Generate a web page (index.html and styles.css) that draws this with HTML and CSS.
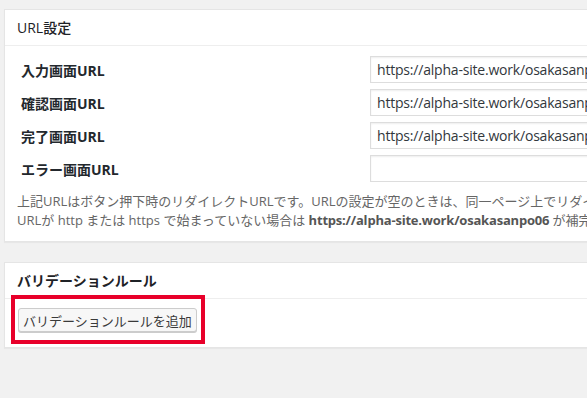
FILE: index.html
```html
<!DOCTYPE html>
<html lang="ja">
<head>
  <meta charset="UTF-8" />
  <meta name="viewport" content="width=device-width, initial-scale=1.0" />
  <title>URL設定</title>
  <link rel="stylesheet" href="styles.css">
</head>
<body>
  <div class="wrap">
    <div class="postbox">
      <h2 class="hndle">URL設定</h2>
      <div class="inside">
        <div class="form-grid">
          <label class="form-label">入力画面URL</label>
          <input class="form-input" type="text" value="https://alpha-site.work/osakasanpo06/contact/" />
          <label class="form-label">確認画面URL</label>
          <input class="form-input" type="text" value="https://alpha-site.work/osakasanpo06/confirm/" />
          <label class="form-label">完了画面URL</label>
          <input class="form-input" type="text" value="https://alpha-site.work/osakasanpo06/thanks/" />
          <label class="form-label">エラー画面URL</label>
          <input class="form-input" type="text" value="" />
        </div>
        <p class="description">
          上記URLはボタン押下時のリダイレクトURLです。URLの設定が空のときは、同一ページ上でリダイレクトします。<br>
          URLが http または https で始まっていない場合は <strong>https://alpha-site.work/osakasanpo06</strong> が補完されます。
        </p>
      </div>
    </div>

    <div class="postbox">
      <h2 class="hndle bold">バリデーションルール</h2>
      <div class="inside inside-btn">
        <span class="highlight">
          <button class="button" type="button">バリデーションルールを追加</button>
        </span>
      </div>
    </div>
  </div>
</body>
</html>
```

FILE: styles.css
```css
body {
  margin: 0;
  background: #f1f1f1;
  color: #23282d;
  font-family: "Open Sans", "Noto Sans CJK JP", sans-serif;
  font-size: 14px;
  overflow: hidden;
}

.wrap {
  padding: 9px 0 0 4px;
  width: 900px;
}

.postbox {
  background: #fff;
  border: 1px solid #e5e5e5;
  box-shadow: 0 1px 1px rgba(0, 0, 0, 0.04);
  margin-bottom: 20px;
}

.hndle {
  margin: 0;
  padding: 0 12px;
  height: 35px;
  line-height: 35px;
  font-size: 14px;
  font-weight: 500;
  color: #1e2226;
  border-bottom: 1px solid #eee;
}

.hndle.bold {
  font-weight: 600;
}

.inside {
  padding: 10px 12px 11px;
}

.form-grid {
  display: grid;
  grid-template-columns: 353px 420px;
  row-gap: 6px;
  align-items: center;
}

.form-label {
  padding-left: 4px;
  font-weight: 700;
}

.form-input {
  box-sizing: border-box;
  height: 27px;
  margin: 0;
  padding: 0 6px;
  border: 1px solid #ddd;
  box-shadow: inset 0 1px 2px rgba(0, 0, 0, 0.07);
  font-family: inherit;
  font-size: 14px;
  letter-spacing: -0.2px;
  color: #32373c;
  outline: none;
}

.description {
  margin: 10px 0 0;
  line-height: 19px;
  font-size: 13px;
  color: #666;
  white-space: nowrap;
}

.description strong {
  color: #555;
  letter-spacing: -0.2px;
}

.inside-btn {
  padding: 9px 12px 15px;
}

.highlight {
  position: relative;
  display: inline-block;
  margin-left: 1px;
}

.highlight::after {
  content: "";
  position: absolute;
  left: -7px;
  top: -13px;
  right: -8px;
  bottom: -12px;
  border: 4px solid #e8002a;
}

.button {
  display: block;
  box-sizing: border-box;
  height: 24px;
  margin: 0;
  padding: 0 4px;
  border: 1px solid #ccc;
  border-radius: 3px;
  background: #f7f7f7;
  box-shadow: 0 1px 0 #ccc;
  font-family: inherit;
  font-size: 13px;
  color: #3a3a3a;
}
```
